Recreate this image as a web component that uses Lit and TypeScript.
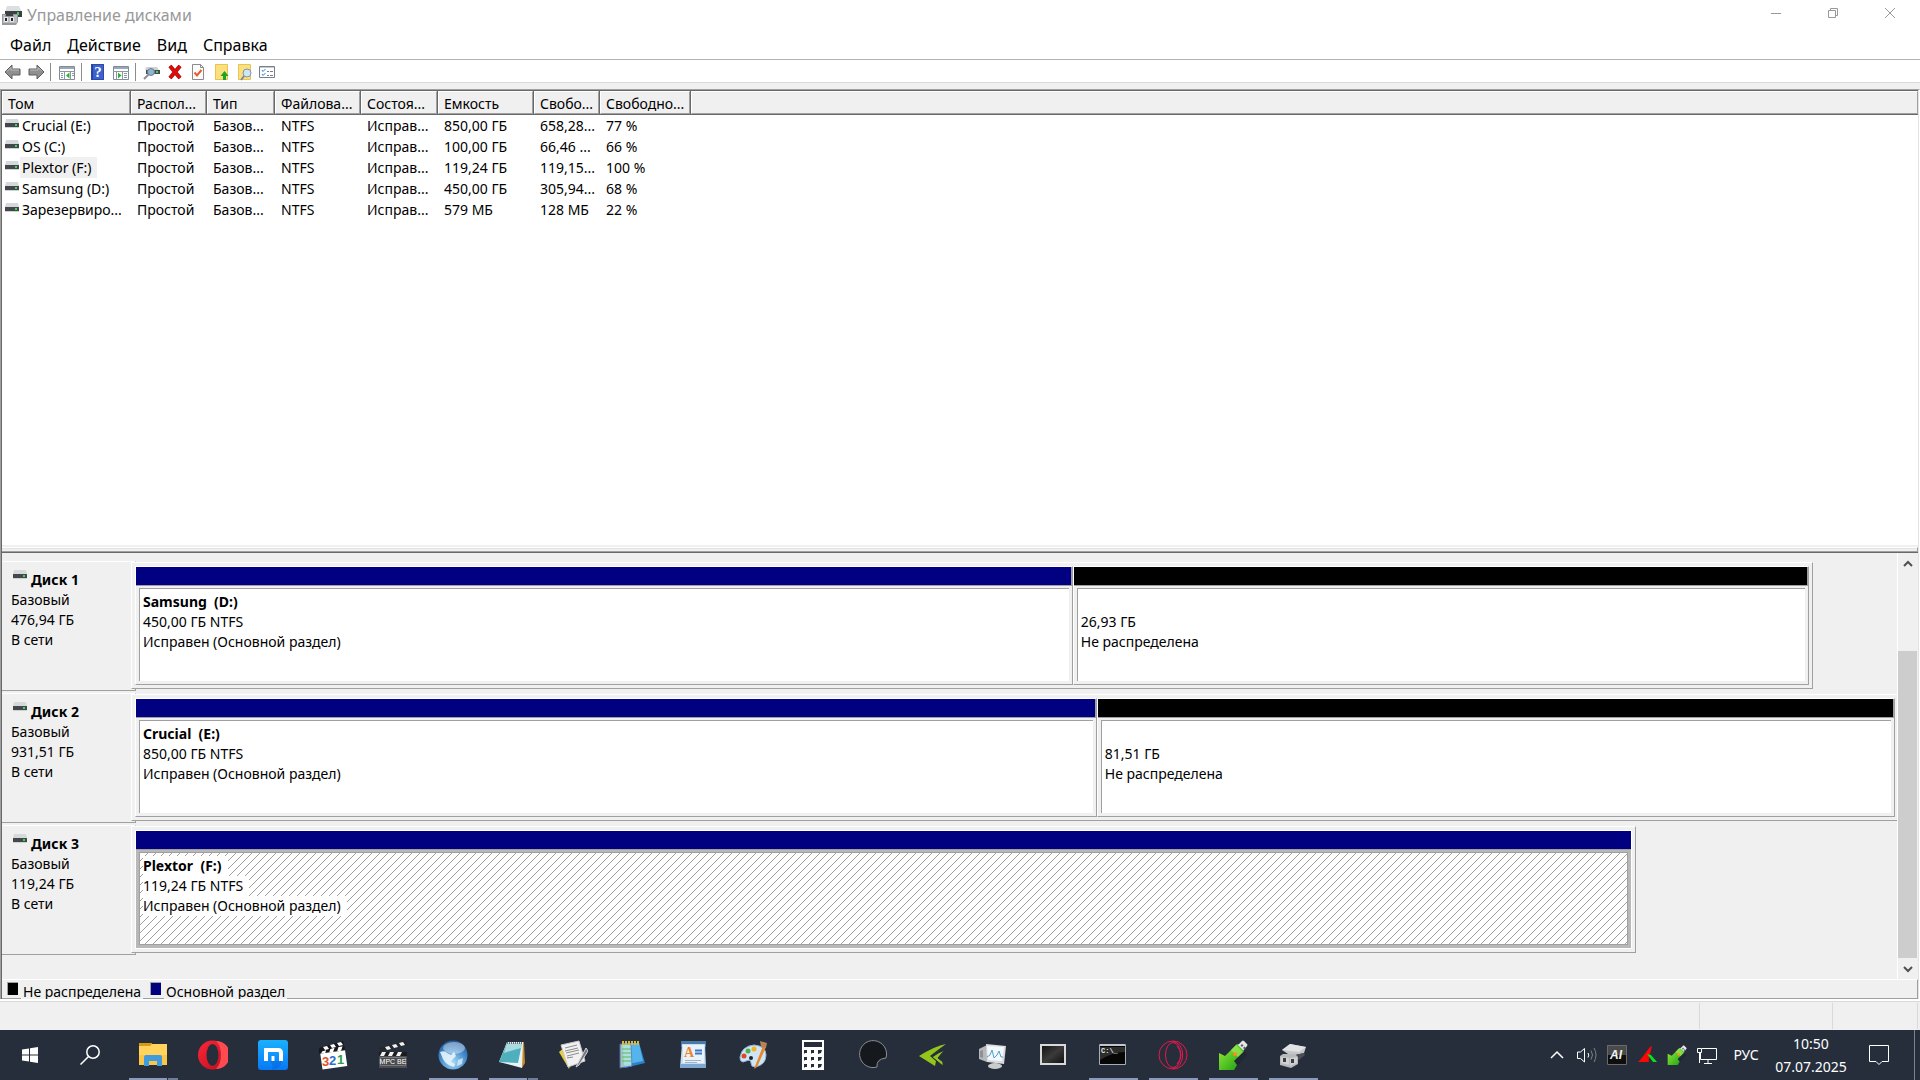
import { LitElement, html, svg, css, nothing, TemplateResult } from "lit";
import { customElement, state } from "lit/decorators.js";
import { classMap } from "lit/directives/class-map.js";

interface VolumeRow {
  name: string;
  layout: string;
  type: string;
  fs: string;
  status: string;
  size: string;
  free: string;
  percent: string;
}

interface Partition {
  name: string;
  size: string;
  status: string;
  kind: "primary" | "free";
  share: number;
}

interface Disk {
  name: string;
  size: string;
  extent: number;
  partitions: Partition[];
}

interface Task {
  label: string;
  icon: TemplateResult;
  open?: boolean;
  stacked?: boolean;
}

const icon = (size: number, body: unknown) =>
  html`<svg class="icon" width=${size} height=${size} viewBox="0 0 ${size} ${size}" aria-hidden="true">${body}</svg>`;

const VOLUMES: VolumeRow[] = [
  { name: "Crucial (E:)", layout: "Простой", type: "Базов...", fs: "NTFS", status: "Исправ...", size: "850,00 ГБ", free: "658,28...", percent: "77 %" },
  { name: "OS (C:)", layout: "Простой", type: "Базов...", fs: "NTFS", status: "Исправ...", size: "100,00 ГБ", free: "66,46 ...", percent: "66 %" },
  { name: "Plextor (F:)", layout: "Простой", type: "Базов...", fs: "NTFS", status: "Исправ...", size: "119,24 ГБ", free: "119,15...", percent: "100 %" },
  { name: "Samsung (D:)", layout: "Простой", type: "Базов...", fs: "NTFS", status: "Исправ...", size: "450,00 ГБ", free: "305,94...", percent: "68 %" },
  { name: "Зарезервиро...", layout: "Простой", type: "Базов...", fs: "NTFS", status: "Исправ...", size: "579 МБ", free: "128 МБ", percent: "22 %" },
];

const COLUMNS = ["Том", "Распол...", "Тип", "Файлова...", "Состоя...", "Емкость", "Свобо...", "Свободно..."];

const HEALTHY = "Исправен (Основной раздел)";
const UNALLOCATED = "Не распределена";

const DISKS: Disk[] = [
  {
    name: "Диск 1",
    size: "476,94 ГБ",
    extent: 95.25,
    partitions: [
      { name: "Samsung  (D:)", size: "450,00 ГБ NTFS", status: HEALTHY, kind: "primary", share: 938 },
      { name: "", size: "26,93 ГБ", status: UNALLOCATED, kind: "free", share: 736 },
    ],
  },
  {
    name: "Диск 2",
    size: "931,51 ГБ",
    extent: 100,
    partitions: [
      { name: "Crucial  (E:)", size: "850,00 ГБ NTFS", status: HEALTHY, kind: "primary", share: 962 },
      { name: "", size: "81,51 ГБ", status: UNALLOCATED, kind: "free", share: 798 },
    ],
  },
  {
    name: "Диск 3",
    size: "119,24 ГБ",
    extent: 85.22,
    partitions: [{ name: "Plextor  (F:)", size: "119,24 ГБ NTFS", status: HEALTHY, kind: "primary", share: 1 }],
  },
];

const driveIcon = html`<svg class="drive" width="14" height="9" viewBox="0 0 14 9" aria-hidden="true">
  <path d="M1 0h12l1 4H0z" fill="#d6d9dc" />
  <path d="M0 4h14v4H0z" fill="#44484d" />
  <path d="M0 8h14v1H0z" fill="#cfd1d4" />
  <path d="M10 5h2v2h-2z" fill="#2fe048" />
</svg>`;

const appIcon = icon(20, svg`
  <path d="M5 1h12l3 6H3z" fill="#dcdee0"/>
  <path d="M3 6h17v6H3z" fill="#3c4146"/>
  <path d="M15 7h2v3h-2z" fill="#37d052"/>
  <path d="M0 9h4v2h7V9h5v8l-2 3H0z" fill="#96999e"/>
  <path d="M1 10h2v2h9v-2h3v8H1z" fill="#b9bbbf"/>
  <path d="M2 12h4v5H2zM8 12h4v5H8z" fill="#e8e8ea"/>
  <path d="M3 13h2v3H3zM9 13h2v3H9z" fill="#26282c"/>`);

const TOOLS = {
  back: icon(18, svg`<path d="M1 9l7-7v4h8v6H8v4z" fill="#8f8f8f" stroke="#5c5c5c"/><path d="M3 8.500l4-4V7h8" fill="none" stroke="#bdbdbd"/>`),
  forward: icon(18, svg`<path d="M17 9l-7-7v4H2v6h8v4z" fill="#8f8f8f" stroke="#5c5c5c"/><path d="M3 7h8V4.500l3.500 3.500" fill="none" stroke="#bdbdbd"/>`),
  tree: icon(18, svg`<path d="M1.500 3.500h15v13h-15z" fill="#fff" stroke="#7f8b9a"/><path d="M2 4h14v2H2z" fill="#9aa7b8"/><path d="M1 8.500h16M6.500 9v8M12.500 9v8" stroke="#8c97a5"/><path d="M3 10.500h2M3 12.500h2M3 14.500h2M14 10.500h2M14 12.500h2" stroke="#8c97a5"/><path d="M11.500 9.500v6L8 12.500z" fill="#2fae2f"/>`),
  help: icon(18, svg`<path d="M2 1h13v16H2z" fill="#3b62cf"/><path d="M2 1h2v16H2z" fill="#24429c"/><path d="M2.500 1.500h12v15h-12z" fill="none" stroke="#2c4ba5"/><text x="9" y="14" text-anchor="middle" font-family="Liberation Serif, serif" font-size="15" font-weight="700" fill="#fff">?</text>`),
  pane: icon(18, svg`<path d="M1.500 3.500h15v13h-15z" fill="#fff" stroke="#7f8b9a"/><path d="M2 4h14v2H2z" fill="#9aa7b8"/><path d="M1 8.500h16M4.500 9v8M10.500 9v8" stroke="#8c97a5"/><path d="M12 10.500h3M12 12.500h3M12 14.500h3" stroke="#8c97a5"/><path d="M6 9.500v6l3.500-3z" fill="#2fae2f"/>`),
  rescan: icon(18, svg`<path d="M3 4h11l2 3H2z" fill="#cfd2d6"/><path d="M3 7h14v4H3z" fill="#464b50"/><path d="M13 8h2v2h-2z" fill="#30df49"/><circle cx="8" cy="9" r="3.500" fill="#8fb4d2" stroke="#6a7f90"/><path d="M5.500 11.500L1 16" stroke="#8a8f95" stroke-width="2"/>`),
  remove: icon(18, svg`<path d="M4 3l10 12M14 3L4 15" stroke="#8f0a0a" stroke-width="4"/><path d="M4 3l10 12M14 3L4 15" stroke="#e00b0b" stroke-width="3"/>`),
  check: icon(18, svg`<path d="M3.500 1.500h8l3 3v12h-11z" fill="#fbfbfb" stroke="#8b8b8b"/><path d="M11.500 1.500v3h3" fill="none" stroke="#8b8b8b"/><path d="M5.500 9.500l2.500 3 4.500-5.500" fill="none" stroke="#ea5b2c" stroke-width="2"/>`),
  folderUp: icon(18, svg`<path d="M3 1h13v16H3z" fill="#fbe07c"/><path d="M3.500 1.500h12v15h-12z" fill="none" stroke="#e6c458"/><path d="M11 17v-4H8.500L12.500 8l4 5H14v4z" fill="#18a52b"/>`),
  folderFind: icon(18, svg`<path d="M3 1h12v16H3z" fill="#fbe07c"/><path d="M3.500 1.500h12v15h-12z" fill="none" stroke="#e6c458"/><path d="M9.500 12.500L6 17" stroke="#7e8a97" stroke-width="2"/><circle cx="12" cy="10" r="4" fill="#cfe6f7" stroke="#8196a8"/>`),
  list: icon(18, svg`<path d="M1.500 3.500h15v11h-15z" fill="#fff" stroke="#76808b"/><path d="M2 4h14v1H2z" fill="#c4cad1"/><path d="M4 7l1 1.500L7.500 6M4 11l1 1.500L7.500 10" fill="none" stroke="#3c7fd0"/><path d="M9 8.500h2M12 8.500h3M9 12.500h2M12 12.500h3" stroke="#76808b"/>`),
};

const usbArrow = (id: string) => svg`
  <defs><linearGradient id=${id} x1="0" y1="0" x2="1" y2="1"><stop offset="0" stop-color="#9cf03a"/><stop offset="1" stop-color="#129a10"/></linearGradient></defs>
  <path d="M8 27l13-3 8-9-2-3z" fill="#1c222c" opacity=".5"/>
  <path d="M21 4l3-3q1-1 2 0l3 3q1 1 0 2l-4 5-6-6z" fill="#e4e6e8"/>
  <path d="M22.500 5.500l1.500-1.500 1.500 1.500L24 7zM25 8l1.500-1.500L28 8l-1.500 1.500z" fill="#5b6066"/>
  <path d="M19 4l7 7-10 10 3 4-3 5H1V13l6 3z" fill="url(#${id})"/>
  <path d="M18 5l7 7-5 5-7-7z" fill="#a6ee5e" opacity=".6"/>
  <circle cx="17" cy="14" r="2" fill="#ff8a1e"/>`;

const TASKS: Task[] = [
  { label: "Проводник", open: true, stacked: true, icon: icon(30, svg`
    <path d="M1 3h13v4H1z" fill="#d89a12"/><path d="M1 6h11l2-2h15v21H1z" fill="#ffd35c"/><path d="M1 15h28v10H1z" fill="#f9c648"/>
    <path d="M6 26V17q0-2 2-2h14q2 0 2 2v9h-5v-5h-8v5z" fill="#3f9ade"/>`) },
  { label: "Opera", icon: icon(30, svg`
    <defs><linearGradient id="opr" x1="0" y1="0" x2="1" y2="1"><stop offset="0" stop-color="#ff2638"/><stop offset="1" stop-color="#b80f1e"/></linearGradient></defs>
    <circle cx="14.500" cy="15" r="14.500" fill="url(#opr)"/><path d="M18 1a14 14 0 0 1 0 28q5-5 5-14T18 1z" fill="#ff4a52"/>
    <ellipse cx="14.500" cy="15" rx="6" ry="11" fill="#262e3c"/>`) },
  { label: "Maxthon", icon: icon(30, svg`
    <defs><linearGradient id="mx" x1="0" y1="0" x2="0" y2="1"><stop offset="0" stop-color="#1ab0ff"/><stop offset="1" stop-color="#0878f5"/></linearGradient></defs>
    <rect width="30" height="30" rx="3" fill="url(#mx)"/><path d="M12 21h12q-1 8-10 9 2-4-2-9z" fill="#0563d8" opacity=".5"/>
    <path d="M8 21V10h12q3 0 3 3v8" fill="none" stroke="#fff" stroke-width="4"/><path d="M15 21v-5" stroke="#fff" stroke-width="3"/>`) },
  { label: "Media Player Classic", icon: icon(30, svg`
    <g transform="rotate(-8 15 18)"><path d="M3 11h25v17H3z" fill="#fff"/><path d="M2 8h26v4H2z" fill="#15171b"/>
    <path d="M6 8h4l-2 4H4zM14 8h4l-2 4h-4zM22 8h4l-2 4h-4z" fill="#fff"/></g>
    <path d="M1 8L25 1l1 4L2 12z" fill="#15171b"/><path d="M5 7l4-1 2 3-4 1zM12 5l4-1 2 3-4 1zM19 3l4-1 2 3-4 1z" fill="#fff"/>
    <g font-family="Liberation Sans, sans-serif" font-weight="700" font-size="13"><text x="4" y="26" fill="#e0521e">3</text><text x="11" y="25" fill="#2d6fd0">2</text><text x="19" y="24" fill="#2d9f3c">1</text></g>`) },
  { label: "MPC-BE", icon: icon(30, svg`
    <path d="M1 12h28v16H1z" fill="#4a4c4f"/><path d="M1 12h28v4H1z" fill="#1b1c1e"/><path d="M4 12h4l-2 4H2zM12 12h4l-2 4h-4zM20 12h4l-2 4h-4z" fill="#f2f2f2"/>
    <path d="M1 8L28 1l1 4L2 11z" fill="#25272a"/><path d="M7 7l4-1 2 3-4 1zM14 5l4-1 2 3-4 1zM21 3l4-1 2 3-4 1z" fill="#f2f2f2"/>
    <path d="M2.500 17.500h25v8h-25z" fill="none" stroke="#77797c"/>
    <text x="15" y="24" text-anchor="middle" font-family="Liberation Sans, sans-serif" font-size="7" fill="#fff">MPC BE</text>`) },
  { label: "Браузер", open: true, icon: icon(30, svg`
    <defs><radialGradient id="glb" cx=".5" cy=".75" r=".8"><stop offset="0" stop-color="#a2dcfa"/><stop offset=".6" stop-color="#3f86c8"/><stop offset="1" stop-color="#1d4f8c"/></radialGradient></defs>
    <circle cx="15" cy="15" r="14.500" fill="url(#glb)"/><path d="M2 12q5-2 7 1l4 2 3-3 2 4-3 3-2 3 4 2-1 3q-8-2-11-8z" fill="#e8f4fb" opacity=".9"/>
    <path d="M20 20l5-2-1 6-5 2z" fill="#e8f4fb" opacity=".7"/><ellipse cx="16" cy="8" rx="11" ry="6" fill="#fff" opacity=".4"/>`) },
  { label: "Блокнот", open: true, stacked: true, icon: icon(30, svg`
    <path d="M10 2h16l1 21-3 5z" fill="#c68a2e"/><path d="M9 2h16l-1 26L1 22z" fill="#e9f3f3"/>
    <path d="M9 3h15l-4 20L1 22z" fill="#4fb0bd"/><path d="M9 3h15l-1 5q-8 2-17 5z" fill="#a9dbe0"/><path d="M9 3h16" stroke="#6d7478" stroke-width="2" stroke-dasharray="1 1"/>`) },
  { label: "Документы", icon: icon(30, svg`
    <path d="M1 12l7-6 4 20-1 3z" fill="#e7cc3b"/><path d="M3 5l18-4 6 20-17 6z" fill="#f1f1f1" stroke="#c9c9c9"/>
    <path d="M7 8l12-3M7 11l13-3M8 13l13-3M9 16l12-3M9 18l6-1" stroke="#8c8c8c"/><path d="M28 8L18 27l3-2 9-14z" fill="#75797e" stroke="#d5d6d8"/>`) },
  { label: "Notepad++", icon: icon(30, svg`
    <path d="M4 3h17l6 20-20 5z" fill="#2a83c9"/><path d="M5 3h16l4 18-19 4z" fill="#56b4ec"/><path d="M2 4h11l1 22-12 2z" fill="#c3ecd9" stroke="#5f76d6" opacity=".8"/>
    <path d="M4 9h9M4 13h9M4 17h9M4 21h9" stroke="#59b95b"/><path d="M4 3h18" stroke="#d8b93b" stroke-width="4" stroke-dasharray="2 1"/>`) },
  { label: "WordPad", icon: icon(30, svg`
    <path d="M3 1h25v6H3z" fill="#4a7ba8"/><path d="M4 4h23l1 24H2z" fill="#c8dff2"/><path d="M5 5h21v18H5z" fill="#e8f2fb"/><path d="M2 24h26v4H2z" fill="#7ea8cf"/>
    <text x="6" y="17" font-family="Liberation Serif, serif" font-weight="700" font-size="14" fill="#f08326">A</text>
    <path d="M17 10.500h7M17 13.500h7" stroke="#3c74c8" stroke-width="2"/><path d="M7 20.500h16M7 22.500h12" stroke="#a3b3c4"/>`) },
  { label: "Paint", icon: icon(30, svg`
    <path d="M2 17Q4 6 16 5q12 1 12 10 0 10-11 12-4 0-4-4t-5-2q-6 3-6-4z" fill="#cfe4f5" stroke="#8fb3d2"/>
    <circle cx="6" cy="16" r="2.500" fill="#e0442f"/><circle cx="10" cy="11" r="2.500" fill="#49b04a"/><circle cx="16" cy="9" r="2.500" fill="#f2b51f"/><circle cx="13" cy="18" r="2" fill="#1d2430"/>
    <path d="M25 6L16 29l3-2 9-20z" fill="#e8862a"/><path d="M22 1l7 2-1 5-5-1z" fill="#b58358"/>`) },
  { label: "Калькулятор", icon: icon(30, svg`
    <path d="M4 0h22v30H4z" fill="#fff"/><path d="M6 2h18v5H6z" fill="#262e3c"/>
    <path d="M6 10h3v3H7l-1 1zM13 10h3v3h-2l-1 1zM20 10h4l-1 3-3 1zM6 17h3v3H7l-1 1zM13 17h3v3h-2l-1 1zM20 17h4l-1 3-3 1zM6 24h3v3H7l-1 1zM13 24h3v3h-2l-1 1zM20 24h4l-1 3-3 1z" fill="#262e3c"/>`) },
  { label: "Утилита", icon: icon(30, svg`
    <path d="M28 18A13.500 13.500 0 1 0 19 27q-1-8 9-9z" fill="#15181c" stroke="#8c8f93"/>`) },
  { label: "NVIDIA Inspector", icon: icon(30, svg`
    <path d="M28 4Q17 6 1 16l16 10 1-5-6-5q9-7 16-12z" fill="#93c61b"/><path d="M27 10q-6 2-13 7l11 9 0-4-5-4q3-4 7-8z" fill="#93c61b" stroke="#262e3c"/>`) },
  { label: "Монитор ресурсов", icon: icon(30, svg`
    <path d="M1 9l8-4v17l-8-3z" fill="#b6b8ba"/><path d="M2 11l3-1v8l-3-1z" fill="#8e9194"/><path d="M8 4l20 2-2 18-17-2z" fill="#d9dbdd"/>
    <path d="M9 6l17 1-2 14-14-1z" fill="#f4f9fd"/><path d="M9 17l3-2 2-5 2 8 3-3 2-4 2 6h2" fill="none" stroke="#4f9fcf"/><ellipse cx="17" cy="26" rx="7" ry="3" fill="#c9cbcd"/>`) },
  { label: "Экран", icon: icon(30, svg`
    <defs><linearGradient id="scr" x1="0" y1="0" x2="1" y2="1"><stop offset="0" stop-color="#101010"/><stop offset=".5" stop-color="#3a3a3a"/><stop offset="1" stop-color="#0d0d0d"/></linearGradient></defs>
    <path d="M3 5h24v19H3z" fill="url(#scr)" stroke="#d8d8d8" stroke-width="2"/>`) },
  { label: "Командная строка", open: true, icon: icon(30, svg`
    <path d="M1.500 4.500h26v20h-26z" fill="#070707" stroke="#a9adb2"/><path d="M2 4h25v2H2z" fill="#c3c7cb"/><path d="M2 7h25v5q-12 0-25 8z" fill="#3d3d3d" opacity=".7"/>
    <text x="3" y="13" font-family="Liberation Mono, monospace" font-weight="700" font-size="7" fill="#e8e8e8">C:\\_</text>`) },
  { label: "Opera GX", open: true, icon: icon(30, svg`
    <g fill="none" stroke="#e8174b"><circle cx="15" cy="15" r="14"/><ellipse cx="15" cy="15" rx="7.500" ry="12.500"/><path d="M15 1.500a9 12.500 0 0 1 0 27M19 6q4 4 4 9t-4 9"/></g>`) },
  { label: "Безопасное извлечение", open: true, icon: icon(30, usbArrow("usb1")) },
  { label: "Управление дисками", open: true, icon: icon(30, svg`
    <path d="M4 10l8-6 16 3-2 6-13 3z" fill="#c4c6c9"/><path d="M4 10l8-6 16 3-7 5z" fill="#e0e2e4"/><path d="M13 16l13-3 1 2-6 5z" fill="#4b4f54"/>
    <path d="M2 16l3-2h12l3 3v7l-7 4-11-3z" fill="#b7b9bc"/><path d="M3 17l8 1v7l-8-2zM12 18l7-1v6l-7 3z" fill="#cfd1d3"/><path d="M5 18h3v4H5zM13 19h3v4h-3z" fill="#3b3f44"/>`) },
];

@customElement("app-root")
export class AppRoot extends LitElement {
  @state() private selected = "Plextor (F:)";

  static styles = css`
    :host {
      --face: #f0f0f0;
      --shadow: #a0a0a0;
      --dark: #696969;
      --light: #ffffff;
      --navy: #000080;
      --bar: #262e3c;
      display: flex;
      flex-direction: column;
      min-height: 100vh;
      background: var(--face);
      color: #000;
      font-family: "Noto Sans", "Open Sans", sans-serif;
      font-size: 14px;
      line-height: 20px;
    }
    * { box-sizing: border-box; }
    button {
      margin: 0;
      padding: 0;
      border: 0;
      background: none;
      color: inherit;
      font: inherit;
      display: flex;
      align-items: center;
      justify-content: center;
    }
    svg { display: block; flex: none; }

    .title { display: flex; height: 30px; padding-right: 2px; background: #fff; }
    .title h1 {
      flex: 1;
      display: flex;
      align-items: center;
      gap: 5px;
      margin: 0;
      padding-left: 2px;
      color: #999;
      font-size: 16px;
      font-weight: 400;
    }
    .title button { width: 57px; height: 26px; color: #999; }

    .menu { display: flex; height: 30px; padding-left: 2px; background: #fff; border-bottom: 1px solid #b0b1b5; }
    .menu button { padding: 0 8px; font-size: 16px; }

    .tools { display: flex; align-items: center; height: 23px; padding: 2px 0 0 1px; background: #fff; border-bottom: 1px solid #dadada; }
    .tools button { width: 23px; height: 20px; }
    .tools i { width: 1px; height: 18px; margin: 0 4px 0 3px; background: #8c8c8c; }

    .client {
      flex: 1;
      display: flex;
      flex-direction: column;
      margin-top: 6px;
      border-left: 1px solid var(--shadow);
      border-top: 1px solid var(--shadow);
      border-right: 1px solid var(--light);
    }
    .inner { flex: 1; display: flex; flex-direction: column; border-left: 1px solid var(--dark); border-right: 1px solid #e3e3e3; }

    .volumes { flex: 1; background: #fff; border-top: 1px solid var(--dark); }
    table { width: 100%; table-layout: fixed; border-collapse: separate; border-spacing: 0; }
    .c1 { width: 129px; }
    .c2 { width: 76px; }
    .c3 { width: 68px; }
    .c4 { width: 86px; }
    .c5 { width: 77px; }
    .c6 { width: 96px; }
    .c7 { width: 66px; }
    .c8 { width: 91px; }
    th {
      height: 24px;
      padding: 0;
      background: var(--face);
      font-weight: 400;
      text-align: left;
      white-space: nowrap;
      border-right: 1px solid var(--dark);
      border-bottom: 1px solid var(--dark);
    }
    th span {
      display: block;
      height: 23px;
      padding-left: 5px;
      line-height: 24px;
      border: 1px solid var(--light);
      border-right-color: var(--shadow);
      border-bottom-color: var(--shadow);
    }
    th:last-child { border-right: 0; }
    td { height: 21px; padding: 0 0 0 6px; line-height: 21px; white-space: nowrap; }
    td:first-child { padding-left: 3px; }
    .vol { display: flex; }
    .vol .drive { margin-top: 4px; }
    .vol span { padding: 0 6px 0 2px; margin-left: 1px; }
    .selected .vol span { background: #f0f0f0; }

    .splitter {
      height: 8px;
      padding-top: 2px;
      background: var(--face);
      border-bottom: 1px solid var(--dark);
    }
    .splitter div { height: 5px; border-top: 1px solid var(--light); border-bottom: 1px solid var(--shadow); box-shadow: inset 0 1px #e3e3e3; border-right: 1px solid var(--shadow); }

    .graph { display: flex; }
    .disks { flex: 1; min-width: 0; padding: 8px 0 22px; overflow: hidden; }
    .disk { display: flex; height: 132px; }
    .info {
      flex: none;
      width: 134px;
      height: 130px;
      padding: 8px 0 0 9px;
      border: 1px solid var(--light);
      border-left: 0;
      border-right-color: var(--shadow);
      border-bottom-color: var(--shadow);
    }
    .info h2 { display: flex; gap: 4px; margin: 0; padding-left: 2px; font-size: 14px; font-weight: 700; line-height: 20px; }
    .track { flex: 1; min-width: 0; margin: 1px 0 0 -5px; }
    .box {
      display: flex;
      height: 127px;
      padding: 3px;
      background: var(--face);
      border: 1px solid var(--light);
      border-right-color: var(--shadow);
      border-bottom-color: var(--shadow);
    }
    .full .box { border-right: 0; padding-right: 2px; }
    .part {
      flex-basis: 0;
      min-width: 0;
      display: flex;
      flex-direction: column;
      border: 1px solid var(--light);
      border-right-color: var(--shadow);
      border-bottom-color: var(--shadow);
    }
    .strip { height: 19px; background: var(--navy); border-right: 1px solid var(--shadow); border-bottom: 1px solid var(--shadow); }
    .free .strip { background: #000; }
    .body { flex: 1; display: flex; padding: 2px 3px 3px; }
    .face {
      flex: 1;
      position: relative;
      padding: 3px 0 0 3px;
      background: #fff;
      border-left: 1px solid var(--shadow);
      border-top: 1px solid var(--shadow);
    }
    .face p { position: relative; width: fit-content; height: 20px; margin: 0; padding-right: 6px; white-space: pre; }
    .face .name { font-weight: 700; }
    .picked { border-color: var(--light); }
    .picked .strip { border-right: 0; }
    .picked .body { background: #b8b8b8; }
    .picked .face { border: 1px solid var(--shadow); }
    .picked .face p { background: #fff; }
    .hatch { position: absolute; inset: 0; width: 100%; height: 100%; }

    .scroll { display: flex; flex-direction: column; flex: none; width: 21px; padding-right: 1px; border-left: 1px solid var(--light); color: #505050; }
    .scroll button { height: 21px; }
    .rail { flex: 1; padding-top: 77px; display: flex; }
    .thumb { flex: 1; background: #cdcdcd; }

    .legend {
      display: flex;
      height: 20px;
      padding-left: 5px;
      border: 1px solid var(--light);
      border-left: 0;
      border-right-color: var(--shadow);
      border-bottom-color: var(--shadow);
    }
    .legend div { display: flex; margin-right: 7px; }
    .legend i { width: 11px; height: 13px; margin: 2px 3px 0 0; background: var(--navy); border: 1px solid var(--shadow); border-right: 0; border-bottom: 0; }
    .legend .none { background: #000; }
    .legend span { padding: 0 2px; height: 20px; line-height: 24px; background: var(--face); }

    .status { display: flex; justify-content: flex-end; height: 31px; padding: 2px 2px 1px 0; border-top: 2px solid #fff; background: var(--face); box-shadow: inset 0 1px #d9d9d9; }
    .status div { border-right: 1px solid #d9d9d9; }
    .s1 { width: 10px; }
    .s2 { width: 133px; }
    .s3 { width: 85px; }

    .taskbar { display: flex; height: 50px; background: var(--bar); color: #fff; }
    .start, .find { width: 60px; }
    .apps { flex: 1; display: flex; padding-left: 3px; }
    .task { position: relative; width: 60px; }
    .open::after { content: ""; position: absolute; left: 6px; right: 5px; bottom: 0; height: 2px; background: #8b9ab9; }
    .stacked::after { background: linear-gradient(90deg, #8b9ab9 38px, #262e3c 38px, #262e3c 39px, #6f7c96 39px); }
    .tray { display: flex; align-items: center; }
    .tray button { width: 30px; height: 50px; }
    .tray .lang { width: 48px; }
    .tray .clock { width: 82px; flex-direction: column; line-height: 23px; }
    .tray .notes { width: 54px; margin-right: 8px; }
    .desk { width: 6px; align-self: stretch; border-left: 1px solid #7d828b; }
  `;

  private tool(label: string, art: TemplateResult) {
    return html`<button aria-label=${label}>${art}</button>`;
  }

  private renderVolume(v: VolumeRow) {
    return html`<tr class=${classMap({ selected: v.name === this.selected })} @click=${() => (this.selected = v.name)}>
      <td><div class="vol">${driveIcon}<span>${v.name}</span></div></td>
      <td>${v.layout}</td><td>${v.type}</td><td>${v.fs}</td><td>${v.status}</td>
      <td>${v.size}</td><td>${v.free}</td><td>${v.percent}</td><td></td>
    </tr>`;
  }

  private renderPartition(p: Partition) {
    const picked = p.name !== "" && p.name.replace("  ", " ") === this.selected;
    return html`<div class=${classMap({ part: true, free: p.kind === "free", picked })} style="flex-grow:${p.share}">
      <div class="strip"></div>
      <div class="body">
        <div class="face">
          ${picked
            ? html`<svg class="hatch" aria-hidden="true" shape-rendering="crispEdges">
                <defs><pattern id="hatch" width="8" height="8" patternUnits="userSpaceOnUse">
                  <path d="M7 0h1v1H7zM6 1h1v1H6zM5 2h1v1H5zM4 3h1v1H4zM3 4h1v1H3zM2 5h1v1H2zM1 6h1v1H1zM0 7h1v1H0z" fill="#a0a0a0" />
                </pattern></defs>
                <rect width="100%" height="100%" fill="url(#hatch)" />
              </svg>`
            : nothing}
          <p class="name">${p.name}</p>
          <p>${p.size}</p>
          <p>${p.status}</p>
        </div>
      </div>
    </div>`;
  }

  private renderDisk(d: Disk) {
    return html`<section class=${classMap({ disk: true, full: d.extent === 100 })}>
      <div class="info">
        <h2>${driveIcon}${d.name}</h2>
        <div>Базовый</div>
        <div>${d.size}</div>
        <div>В сети</div>
      </div>
      <div class="track">
        <div class="box" style="width:${d.extent}%">${d.partitions.map((p) => this.renderPartition(p))}</div>
      </div>
    </section>`;
  }

  private renderTray() {
    return html`<div class="tray">
      <button aria-label="Скрытые значки">${icon(20, svg`<path d="M4 13l6-6 6 6" fill="none" stroke="#fff" stroke-width="1.500"/>`)}</button>
      <button aria-label="Громкость">${icon(20, svg`<g fill="none" stroke="#fff"><path d="M.5 7v6.500h3l4 3.500V3.500L3.500 7z"/><path d="M11 8q1.500 2 0 4.500"/><path d="M14 5.500q3 4.500 0 9M17 3q4 7 0 14" stroke="#7d828b"/></g>`)}</button>
      <button aria-label="AI Suite">${icon(20, svg`<path d="M0 0h20v20H0z" fill="#4a4a4a"/><path d="M0 10h20v10H0z" fill="#0e0e0e"/><path d="M.5.5h19v19H.5z" fill="none" stroke="#6a6a6a"/><text x="9" y="14" text-anchor="middle" font-family="Liberation Sans, sans-serif" font-size="12" font-weight="700" font-style="italic" fill="#f2f2f2">AI</text>`)}</button>
      <button aria-label="Мониторинг">${icon(20, svg`<path d="M0 17h1l3-3 9-12 2-1-1 4-3 12z" fill="#ff0505"/><path d="M10 9l4 1 6 7h-4z" fill="#0be01e"/><path d="M9 6l3 11H8z" fill="#ff0505"/>`)}</button>
      <button aria-label="Извлечение устройства"><svg width="20" height="20" viewBox="0 0 30 30" aria-hidden="true">${usbArrow("usb2")}</svg></button>
      <button aria-label="Сеть">${icon(20, svg`<g fill="none" stroke="#fff"><path d="M5 3.500h14.500v11H3.500V8M7 18.500h8M11 15v3"/><path d="M.5 3.500h4v4h-4zM2.500 8v10"/></g>`)}</button>
      <button class="lang">РУС</button>
      <button class="clock"><span>10:50</span><span>07.07.2025</span></button>
      <button class="notes" aria-label="Уведомления">${icon(20, svg`<path d="M.5.5h19v16H13l-3 3-3-3H.5z" fill="none" stroke="#fff"/>`)}</button>
      <div class="desk"></div>
    </div>`;
  }

  render() {
    return html`
      <header class="title">
        <h1>${appIcon}Управление дисками</h1>
        <button aria-label="Свернуть">${icon(10, svg`<path d="M0 5.500h10" stroke="currentColor"/>`)}</button>
        <button aria-label="Восстановить">${icon(10, svg`<path d="M.5 2.500h7v7h-7zM2.500 2.500v-2h7v7h-2" fill="none" stroke="currentColor"/>`)}</button>
        <button aria-label="Закрыть">${icon(10, svg`<path d="M0 0l10 10M10 0L0 10" stroke="currentColor"/>`)}</button>
      </header>
      <nav class="menu">${["Файл", "Действие", "Вид", "Справка"].map((m) => html`<button>${m}</button>`)}</nav>
      <div class="tools">
        ${this.tool("Назад", TOOLS.back)}${this.tool("Вперед", TOOLS.forward)}<i></i>
        ${this.tool("Дерево консоли", TOOLS.tree)}<i></i>
        ${this.tool("Справка", TOOLS.help)}${this.tool("Панель действий", TOOLS.pane)}<i></i>
        ${this.tool("Повторить проверку", TOOLS.rescan)}${this.tool("Удалить", TOOLS.remove)}
        ${this.tool("Свойства", TOOLS.check)}${this.tool("Вверх", TOOLS.folderUp)}
        ${this.tool("Найти", TOOLS.folderFind)}${this.tool("Список", TOOLS.list)}
      </div>
      <main class="client">
        <div class="inner">
          <div class="volumes">
            <table>
              <colgroup>${COLUMNS.map((_, i) => html`<col class="c${i + 1}" />`)}<col /></colgroup>
              <thead><tr>${COLUMNS.map((c) => html`<th><span>${c}</span></th>`)}<th><span></span></th></tr></thead>
              <tbody>${VOLUMES.map((v) => this.renderVolume(v))}</tbody>
            </table>
          </div>
          <div class="splitter"><div></div></div>
          <div class="graph">
            <div class="disks">${DISKS.map((d) => this.renderDisk(d))}</div>
            <div class="scroll">
              <button aria-label="Прокрутить вверх">${icon(10, svg`<path d="M1 7l4-4 4 4" fill="none" stroke="currentColor" stroke-width="2"/>`)}</button>
              <div class="rail"><div class="thumb"></div></div>
              <button aria-label="Прокрутить вниз">${icon(10, svg`<path d="M1 3l4 4 4-4" fill="none" stroke="currentColor" stroke-width="2"/>`)}</button>
            </div>
          </div>
          <div class="legend">
            <div><i class="none"></i><span>Не распределена</span></div>
            <div><i></i><span>Основной раздел</span></div>
          </div>
        </div>
      </main>
      <div class="status"><div class="s1"></div><div class="s2"></div><div class="s3"></div></div>
      <footer class="taskbar">
        <button class="start" aria-label="Пуск">${icon(16, svg`<path d="M0 2.500l7-1V7.500H0zM8 1.300L16 0v7.500H8zM0 8.500h7v6l-7-1zM8 8.500h8V16l-8-1.200z" fill="#fff"/>`)}</button>
        <button class="find" aria-label="Поиск">${icon(20, svg`<g fill="none" stroke="#fff" stroke-width="1.500"><circle cx="13" cy="7" r="6.200"/><path d="M8.500 11.500L.5 19.500"/></g>`)}</button>
        <div class="apps">
          ${TASKS.map((t) => html`<button class=${classMap({ task: true, open: !!t.open, stacked: !!t.stacked })} aria-label=${t.label}>${t.icon}</button>`)}
        </div>
        ${this.renderTray()}
      </footer>
    `;
  }
}
